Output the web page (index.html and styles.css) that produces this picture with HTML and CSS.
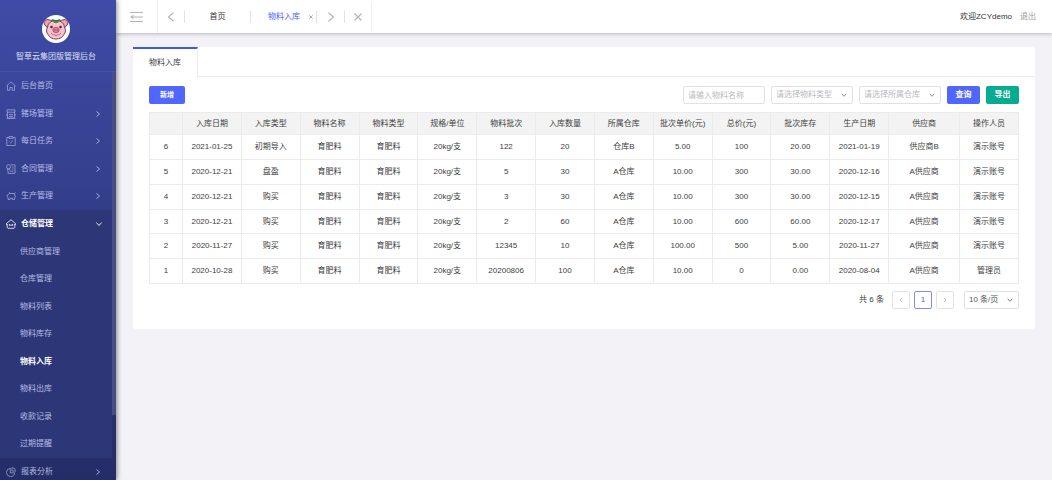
FILE: index.html
```html
<!DOCTYPE html>
<html lang="zh-CN">
<head>
<meta charset="utf-8">
<title>智草云集团版管理后台</title>
<meta name="viewport" content="width=device-width, initial-scale=1">
<link rel="stylesheet" href="styles.css">
</head>
<body>
<div class="app">
  <aside class="sidebar">
    <div class="brand">
      <svg class="logo" viewBox="0 0 28 28" aria-hidden="true">
        <circle cx="14" cy="14" r="14" fill="#fff"/>
        <path d="M10 6C6.500 3.800 2.300 4.500 2 7c0 2.800 2.300 5.800 5 6zM18 6c3.500-2.200 7.700-1.500 8 1 0 2.800-2.300 5.800-5 6z" fill="#f4a0b4" stroke="#5d3540" stroke-width=".9"/>
        <path d="M14 5.500c5 0 8 2.500 8.500 7 1.500 2 1.300 5-.5 7-1.500 3-4.500 4.500-8 4.500s-6.500-1.500-8-4.500c-1.800-2-2-5-.5-7 .5-4.500 3.500-7 8.500-7z" fill="#f9c0cf" stroke="#5d3540" stroke-width=".9"/>
        <path d="M14 7.800C12 7.500 10.200 6.500 9.800 4.500c1.800 0 3.400.700 4.200 2.200.8-1.500 2.400-2.200 4.200-2.200C17.800 6.500 16 7.500 14 7.800z" fill="#2f9a45" stroke="#255c32" stroke-width=".5"/>
        <circle cx="9.500" cy="12" r="1.300" fill="#472a33"/><circle cx="18.500" cy="12" r="1.300" fill="#472a33"/>
        <ellipse cx="14" cy="15" rx="3.200" ry="2.600" fill="#e67f98" stroke="#8a4152" stroke-width=".7"/>
        <circle cx="13" cy="15" r=".6" fill="#5d2535"/><circle cx="15.200" cy="15" r=".6" fill="#5d2535"/>
        <path d="M9 18c2.500 3 7.500 3 10 0" fill="none" stroke="#9c4c60" stroke-width=".8"/>
      </svg>
      <h1 class="brand-name">智草云集团版管理后台</h1>
    </div>
    <nav class="menu">
      <a class="menu-item" href="#"><svg class="icon" viewBox="0 0 10 10"><path d="M.5 5 5 .8 9.500 5M1.500 4.300v5h2.300V6.500h2.400v2.800h2.300v-5"/></svg><span>后台首页</span></a>
      <a class="menu-item" href="#"><svg class="icon" viewBox="0 0 10 10"><path d="M1 .8h8v2.400H1zM1.500 3.200v6h7v-6M.5 9.300h9M.5 5.200v1.500M9.500 5.200v1.500M3 5l1 1.200L5 5l1 1.200L7 5M3 7.500h4"/></svg><span>猪场管理</span><svg class="arrow" viewBox="0 0 6 6"><path d="M1.500.5 4.500 3 1.500 5.500"/></svg></a>
      <a class="menu-item" href="#"><svg class="icon" viewBox="0 0 10 10"><path d="M3 1.500H.8v8h8.400v-8H7M3 .6h4v1.800H3zM3.200 5.500l1.400 1.400L7 4.500"/></svg><span>每日任务</span><svg class="arrow" viewBox="0 0 6 6"><path d="M1.500.5 4.500 3 1.500 5.500"/></svg></a>
      <a class="menu-item" href="#"><svg class="icon" viewBox="0 0 10 10"><path d="M4.800.8H9v8.600H2V7M6 3h1.500M6 5h1.500M4 7.200h3.500"/><circle cx="2.600" cy="2.700" r="2"/><path d="M1.500 4.300v2l1.100-.6 1.100.6v-2"/></svg><span>合同管理</span><svg class="arrow" viewBox="0 0 6 6"><path d="M1.500.5 4.500 3 1.500 5.500"/></svg></a>
      <a class="menu-item" href="#"><svg class="icon" viewBox="0 0 10 10"><path d="M3.500 1.200v1.300L.6 4.800l1.400 1.400V8.500h2V7.300h2.500v1.200h2V6.300M3.500 2.500h5v2M8.500 2.500l1-.8M9.300 4.500v1.800"/></svg><span>生产管理</span><svg class="arrow" viewBox="0 0 6 6"><path d="M1.500.5 4.500 3 1.500 5.500"/></svg></a>
      <div class="menu-group">
        <a class="menu-item menu-item-open" href="#"><svg class="icon" viewBox="0 0 10 10"><path d="M1.200 5.500H.5v-1L5 .8l4.500 3.700v1h-.7M1.200 5v3.500l.8.8h6l.8-.8V5M3 6.200h4M3.800 4.900 3 6.200M6.200 4.900 7 6.200"/></svg><span>仓储管理</span><svg class="arrow" viewBox="0 0 6 6"><path d="M.3 1.500 3 4.500 5.700 1.500"/></svg></a>
        <a class="submenu-item" href="#">供应商管理</a>
        <a class="submenu-item" href="#">仓库管理</a>
        <a class="submenu-item" href="#">物料列表</a>
        <a class="submenu-item" href="#">物料库存</a>
        <a class="submenu-item submenu-item-current" href="#" aria-current="page">物料入库</a>
        <a class="submenu-item" href="#">物料出库</a>
        <a class="submenu-item" href="#">收款记录</a>
        <a class="submenu-item" href="#">过期提醒</a>
      </div>
      <a class="menu-item" href="#"><svg class="icon" viewBox="0 0 10 10"><path d="M4.300 1.300A4.100 4.100 0 1 0 8.700 5.800H4.300zM6 .6v3.500h3.500A3.500 3.500 0 0 0 6 .6z"/></svg><span>报表分析</span><svg class="arrow" viewBox="0 0 6 6"><path d="M1.500.5 4.500 3 1.500 5.500"/></svg></a>
      <div class="scroll-thumb"></div>
    </nav>
  </aside>
  <div class="main">
    <header class="topbar">
      <button class="top-button collapse" aria-label="收起菜单"><svg class="fold-icon" viewBox="0 0 13 12"><path d="M0 1.500h13M4 6h9M0 10.500h13"/><path class="fold-tip" d="M0 6l3.500-2.200v4.400z"/></svg></button>
      <button class="top-button previous" aria-label="上一个"><svg class="nav-icon" viewBox="0 0 10 10"><path d="M7.500.7 2.500 5l5 4.300"/></svg></button>
      <nav class="page-tabs">
        <a class="page-tab page-tab-home" href="#">首页</a>
        <div class="page-tab page-tab-current"><a class="page-link" href="#">物料入库</a><button class="tab-close" aria-label="关闭物料入库"><svg class="tiny-icon" viewBox="0 0 4 4"><path d="m.3.300 3.400 3.400M3.700.3.300 3.700"/></svg></button></div>
      </nav>
      <button class="top-button next" aria-label="下一个"><svg class="nav-icon" viewBox="0 0 10 10"><path d="m2.500.7 5 4.300-5 4.300"/></svg></button>
      <button class="top-button close-all" aria-label="关闭全部"><svg class="nav-icon" viewBox="0 0 10 10"><path d="m1.500 1.500 7 7M8.500 1.500l-7 7"/></svg></button>
      <div class="account"><span>欢迎ZCYdemo</span><a class="logout" href="#">退出</a></div>
    </header>
    <main class="panel">
      <div class="panel-tabs"><a class="panel-tab" href="#">物料入库</a></div>
      <div class="panel-body">
        <form class="toolbar">
          <button type="button" class="button add">新增</button>
          <input class="field" type="text" placeholder="请输入物料名称" aria-label="物料名称">
          <select class="field select" aria-label="物料类型"><option>请选择物料类型</option></select>
          <select class="field select" aria-label="所属仓库"><option>请选择所属仓库</option></select>
          <button type="button" class="button">查询</button>
          <button type="button" class="button export">导出</button>
        </form>
        <table class="records">
          <colgroup><col class="col-index"><col><col><col><col><col><col><col><col><col><col><col><col><col class="col-supplier"><col></colgroup>
          <thead><tr><th></th><th>入库日期</th><th>入库类型</th><th>物料名称</th><th>物料类型</th><th>规格/单位</th><th>物料批次</th><th>入库数量</th><th>所属仓库</th><th>批次单价(元)</th><th>总价(元)</th><th>批次库存</th><th>生产日期</th><th>供应商</th><th>操作人员</th></tr></thead>
          <tbody>
            <tr><td>6</td><td>2021-01-25</td><td>初期导入</td><td>育肥料</td><td>育肥料</td><td>20kg/支</td><td>122</td><td>20</td><td>仓库B</td><td>5.00</td><td>100</td><td>20.00</td><td>2021-01-19</td><td>供应商B</td><td>演示账号</td></tr>
            <tr><td>5</td><td>2020-12-21</td><td>盘盈</td><td>育肥料</td><td>育肥料</td><td>20kg/支</td><td>5</td><td>30</td><td>A仓库</td><td>10.00</td><td>300</td><td>30.00</td><td>2020-12-16</td><td>A供应商</td><td>演示账号</td></tr>
            <tr><td>4</td><td>2020-12-21</td><td>购买</td><td>育肥料</td><td>育肥料</td><td>20kg/支</td><td>3</td><td>30</td><td>A仓库</td><td>10.00</td><td>300</td><td>30.00</td><td>2020-12-15</td><td>A供应商</td><td>演示账号</td></tr>
            <tr><td>3</td><td>2020-12-21</td><td>购买</td><td>育肥料</td><td>育肥料</td><td>20kg/支</td><td>2</td><td>60</td><td>A仓库</td><td>10.00</td><td>600</td><td>60.00</td><td>2020-12-17</td><td>A供应商</td><td>演示账号</td></tr>
            <tr><td>2</td><td>2020-11-27</td><td>购买</td><td>育肥料</td><td>育肥料</td><td>20kg/支</td><td>12345</td><td>10</td><td>A仓库</td><td>100.00</td><td>500</td><td>5.00</td><td>2020-11-27</td><td>A供应商</td><td>演示账号</td></tr>
            <tr><td>1</td><td>2020-10-28</td><td>购买</td><td>育肥料</td><td>育肥料</td><td>20kg/支</td><td>20200806</td><td>100</td><td>A仓库</td><td>10.00</td><td>0</td><td>0.00</td><td>2020-08-04</td><td>A供应商</td><td>管理员</td></tr>
          </tbody>
        </table>
        <div class="pagination">
          <span class="total">共 6 条</span>
          <button class="page-button" aria-label="上一页"><svg class="page-icon" viewBox="0 0 6 6"><path d="M4 .8 2 3l2 2.200"/></svg></button>
          <button class="page-button page-button-current" aria-current="page">1</button>
          <button class="page-button" aria-label="下一页"><svg class="page-icon" viewBox="0 0 6 6"><path d="m2 .8 2 2.200-2 2.200"/></svg></button>
          <select class="field select page-size" aria-label="每页条数"><option>10 条/页</option></select>
        </div>
      </div>
    </main>
  </div>
</div>
</body>
</html>
```
FILE: styles.css
```css
* { box-sizing: border-box; }

body {
  margin: 0;
  font: 8px/12px "Liberation Sans", "Noto Sans CJK SC", sans-serif;
  color: #404040;
  background: #f2f2f7;
}

a { color: inherit; text-decoration: none; }
button, input, select { font: inherit; color: inherit; margin: 0; }
button { padding: 0; border: 0; background: none; cursor: pointer; }
svg { display: block; fill: none; stroke: currentColor; }

.app { display: flex; min-height: 100vh; }

/* Sidebar */
.sidebar {
  flex: 0 0 116px;
  height: 100vh;
  overflow: hidden;
  color: #b6bce6;
  background: linear-gradient(#3f4ba6, #242d66);
  box-shadow: 1px 0 5px rgba(0, 0, 0, .45);
  z-index: 2;
}
.brand {
  display: flex;
  flex-direction: column;
  align-items: center;
  gap: 8px;
  height: 72px;
  padding: 15px 4px 0 0;
  border-bottom: 1px solid #4a54a5;
}
.logo { width: 28px; height: 28px; stroke: none; }
.brand-name { margin: 0; font-size: 8px; line-height: 12px; font-weight: 400; color: #dde0f8; }
.menu { position: relative; }
.menu-item {
  display: flex;
  align-items: center;
  gap: 5px;
  height: 28px;
  padding: 0 15px 0 6px;
}
.menu-item:nth-child(even) { height: 27px; }
.icon { width: 10px; height: 10px; stroke-width: .8; opacity: .8; }
.arrow { width: 6px; height: 6px; margin-left: auto; stroke-width: .9; }
.menu-group { margin-right: 4px; background: #2d3777; }
.menu-group .menu-item { padding-right: 10px; }
.menu-item-open { color: #fff; font-weight: 700; }
.menu-item-open .icon { opacity: 1; }
.submenu-item { display: flex; align-items: center; height: 28px; padding-left: 20px; }
.submenu-item:nth-child(even) { height: 27px; }
.submenu-item-current { color: #fff; font-weight: 700; }
.scroll-thumb {
  position: absolute;
  top: 0;
  right: 0;
  width: 4px;
  height: 343px;
  background: #464f83;
}

/* Top bar */
.main { flex: 1; min-width: 0; }
.topbar {
  display: flex;
  align-items: center;
  height: 33px;
  padding-right: 16px;
  background: #fff;
  box-shadow: 0 1px 4px rgba(0, 0, 0, .25);
}
.top-button {
  display: flex;
  align-items: center;
  justify-content: center;
  height: 12px;
  color: #b5b5b5;
}
.collapse { width: 42px; height: 33px; border-right: 1px solid #eee; }
.fold-icon { width: 13px; height: 12px; stroke-width: 1.2; }
.fold-tip { fill: currentColor; stroke: none; }
.nav-icon { width: 10px; height: 10px; stroke-width: 1.2; }
.previous { width: 27px; border-right: 1px solid #e2e2e2; }
.page-tabs { display: flex; align-items: center; color: #333; }
.page-tab { display: flex; align-items: center; justify-content: center; height: 12px; border-right: 1px solid #e2e2e2; }
.page-tab-home { width: 66px; }
.page-tab-current { width: 66px; gap: 9px; padding-left: 14px; color: #4b5eff; }
.tab-close { color: #999; }
.tiny-icon { width: 4px; height: 4px; stroke-width: .8; }
.next { width: 28px; border-right: 1px solid #e2e2e2; }
.close-all { width: 27px; height: 28px; border-right: 1px solid #eee; }
.account { display: flex; gap: 8px; margin-left: auto; color: #333; }
.logout { color: #999; }

/* Panel */
.panel { margin: 14px 17px 0; padding-bottom: 20px; border-radius: 3px; background: #fff; }
.panel-tabs { height: 30px; border-bottom: 1px solid #ededed; }
.panel-tab {
  display: flex;
  align-items: center;
  justify-content: center;
  width: 65px;
  height: 30px;
  border-top: 2px solid #4458ee;
  border-right: 1px solid #ededed;
  background: #fff;
}
.panel-body { padding: 9px 16px 0; }
.toolbar { display: flex; align-items: center; gap: 6px; margin-bottom: 8px; }
.button {
  width: 33px;
  height: 18px;
  border-radius: 2px;
  color: #fff;
  font-weight: 700;
  background: #5066ff;
}
.add { width: 36px; margin-right: auto; font-size: 7px; }
.export { background: #06ac90; }
.field {
  width: 82px;
  height: 18px;
  padding: 0 4px;
  border: 1px solid #dfe1e6;
  border-radius: 2px;
  outline: 0;
  background: #fff;
  color: #b8bac0;
}
.field::placeholder { color: #b8bac0; opacity: 1; }
.select {
  appearance: none;
  background: #fff url("data:image/svg+xml,%3Csvg xmlns='http://www.w3.org/2000/svg' viewBox='0 0 6 6'%3E%3Cpath d='M.7 1.700 3 4.300 5.300 1.700' fill='none' stroke='%23888'/%3E%3C/svg%3E") right 5px center / 6px 6px no-repeat;
}

.records { width: 100%; table-layout: fixed; border-collapse: collapse; }
.col-index { width: 33px; }
.col-supplier { width: 71px; }
.records th, .records td {
  height: 25px;
  padding: 0;
  border: 1px solid #ebebeb;
  text-align: center;
  white-space: nowrap;
}
.records th { height: 22px; font-weight: 400; background: #f3f3f3; }
.records tr:nth-child(4) td { height: 24px; }

.pagination { display: flex; align-items: center; justify-content: flex-end; gap: 4px; margin-top: 7px; }
.total { margin-right: 4px; }
.page-button {
  display: flex;
  align-items: center;
  justify-content: center;
  width: 18px;
  height: 18px;
  border: 1px solid #e1e2e8;
  border-radius: 2px;
  color: #b5b5b5;
}
.page-button-current { border-color: #7d8bff; color: #4b5eff; }
.page-icon { width: 6px; height: 6px; stroke-width: .8; }
.page-size { width: 55px; margin-left: 6px; color: #555; }
```
